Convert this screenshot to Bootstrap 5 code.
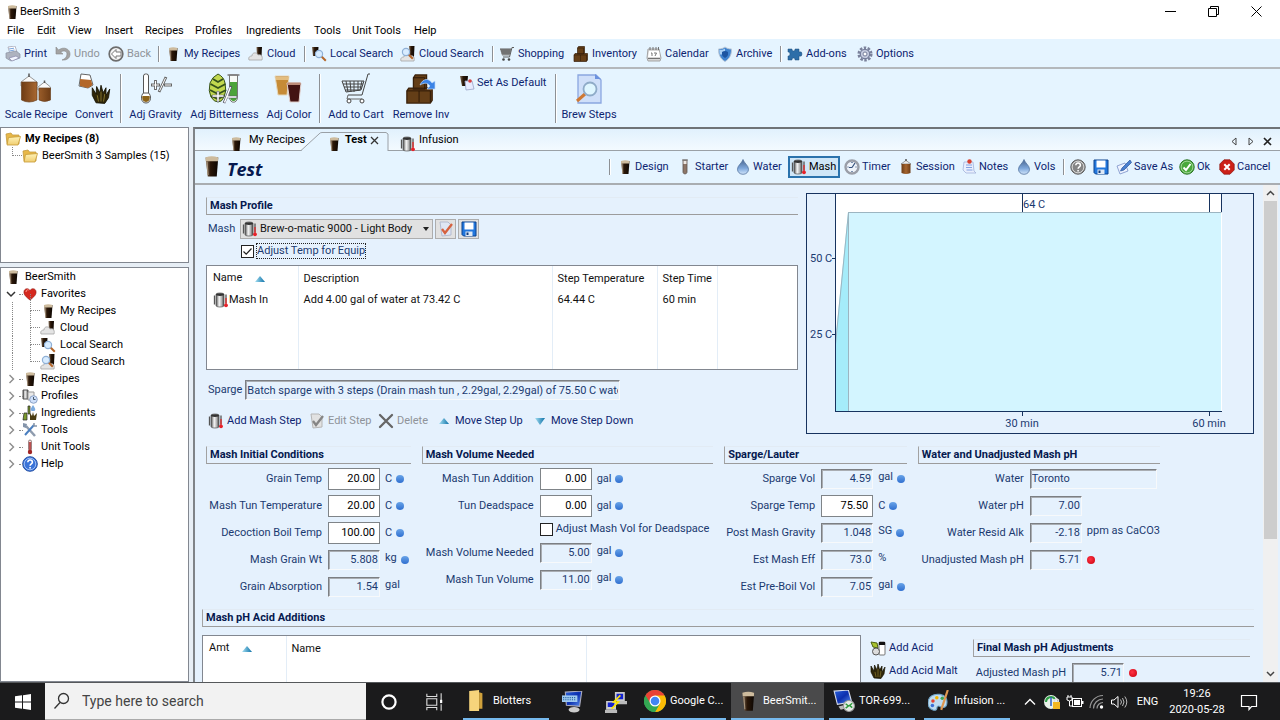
<!DOCTYPE html>
<html lang="en">
<head>
<meta charset="utf-8">
<meta name="viewport" content="width=device-width, initial-scale=1">
<title>BeerSmith 3</title>
<link rel="stylesheet" href="https://cdn.jsdelivr.net/npm/bootstrap@5.3.0/dist/css/bootstrap.min.css">
<script src="https://cdn.jsdelivr.net/npm/bootstrap@5.3.0/dist/js/bootstrap.bundle.min.js"></script>
<style>
:root { --ink:#0d2470; --label:#1b3a70; --pane:#e5f1fd; --tool:#e5f4ff; --edge:#828790; }
body { font-family:Roboto,"Open Sans",sans-serif; font-size:11px; line-height:16px; color:#000; background:#fff; }
button, input, select { font:inherit; color:inherit; }
.app { height:100vh; overflow:hidden; }
.ic { width:16px; height:16px; flex:none; }
.ic-lg { width:34px; height:32px; flex:none; }
.titlebar { height:23px; padding-right:2px; }
.win-ctl { width:43px; height:20px; border:0; background:none; padding:0; display:grid; place-items:center; }
.menus { display:grid; grid-template-columns:30px 31px 37px 40px 50px 51px 68px 38px 62px auto; height:16px; padding-left:7px; justify-content:start; align-items:center; }
.menus a, .tree a { color:#000; text-decoration:none; white-space:nowrap; }
.tools1, .tools2, .head-tools, .step-tools { display:grid; justify-content:start; align-items:center; }
.tools1 { height:30px; padding:1px 0 0 5px; background:var(--tool); border-bottom:2px solid #b4b8bc; grid-template-columns:50px 53px 50px 7px 83px 56px 7px 89px 92px 7px 74px 73px 71px 63px 7px 70px auto; }
.tools2 { height:58px; padding-left:2px; background:var(--tool); grid-template-columns:68px 48px 6px 63px 75px 54px 7px 66px 64px 99px 7px 60px; }
.tb { border:0; background:none; padding:0; display:flex; align-items:center; gap:3px; color:var(--ink); white-space:nowrap; }
.tb:disabled { color:#8f9399; }
.tb-tall { flex-direction:column; gap:2px; height:50px; justify-self:center; }
.tb-side { align-self:start; margin-top:6px; padding-left:6px; gap:2px; }
.vline { width:2px; height:16px; border-left:1px solid #8d9095; border-right:1px solid #fff; }
.tools2 .vline { height:49px; justify-self:center; }
.workspace { min-height:0; background:#e7eef5; }
.side { width:189px; flex:none; }
.tree { background:#fff; border:1px solid var(--edge); overflow:hidden; }
.tree-top { flex:0 0 136px; padding-top:2px; }
.tree ul { list-style:none; margin:0; padding:0; }
.tree li a { position:relative; display:flex; align-items:center; gap:4px; height:17px; }
.tree .twist { width:12px; height:12px; flex:none; margin-right:2px; }
.tree .lv0 { padding-left:4px; }
.tree .lv1 { padding-left:4px; gap:3px; }
.tree .lv1::after { content:""; position:absolute; left:18px; top:9px; width:4px; border-top:1px dotted #888; }
.tree .lv2 { padding-left:39px; }
.tree .lv2::before { content:""; position:absolute; left:29px; top:-8px; width:10px; height:17px; border-left:1px dotted #888; border-bottom:1px dotted #888; }
.tree .lv2::after { content:""; position:absolute; left:11px; top:0; height:17px; border-left:1px dotted #888; }
.tree .sample { margin-left:-18px; }
.tree .sample::before { top:0; height:9px; }
.tree .sample::after { display:none; }
.pane { min-width:0; border-left:2px solid #7f8387; border-top:2px solid #6f7377; background:var(--pane); }
.tabbar { height:22px; background:linear-gradient(#e1f1fd,#f3faff); border-bottom:1px solid #9aa0a6; position:relative; }
.tabbar .tab-shape { position:absolute; left:105px; top:3px; width:90px; height:19px; }
.doc-tabs { display:grid; grid-template-columns:98px 74px auto; padding-left:33px; justify-content:start; height:22px; }
.doc-tabs button { position:relative; border:0; background:none; padding:3px 0 0; display:flex; gap:5px; white-space:nowrap; align-items:flex-start; }
.doc-tabs button + button { gap:3px; }
.doc-tabs .ic { margin-top:4px; }
.mini { border:0; background:none; padding:0; width:17px; height:16px; display:grid; place-items:center; }
.pane-head { height:34px; background:var(--tool); border-bottom:2px solid #a9adb1; padding:0 2px 0 9px; }
.pane-head h1 { font-family:"Open Sans",sans-serif; font-size:18px; line-height:24px; font-weight:700; font-style:italic; color:#06194f; margin:0; padding:4px 0 0 4px; }
.head-glass { width:15px; height:22px; }
.head-tools { grid-template-columns:8px 60px 58px 53px 56px 54px 63px 55px 47px 7px 23px 23px 63px 40px 59px; height:32px; }
.head-tools .tb { gap:2px; }
.tb.on { width:52px; height:22px; border:1px solid #2a72ac; outline:1px solid #2a72ac; outline-offset:-2px; background:#cfe6f7; color:#000; padding-left:2px; }
.form-wrap { min-height:0; padding-right:2px; }
.form-area { min-width:0; overflow:hidden; padding:8px 9px 0 11px; color:var(--label); }
.upper { display:grid; grid-template-columns:minmax(0,1fr) 448px; gap:8px; }
.sec { font-size:11px; line-height:16px; height:18px; margin:0; padding-left:3px; font-weight:700; color:#06194f; border-left:1px solid #a2a2a2; border-bottom:1px solid #9c9c9c; border-top:1px solid #e2ebf4; white-space:nowrap; }
.mash-row { padding-left:2px; gap:2px; }
.mash-row label { width:30px; }
.flatbtn { width:21px; height:20px; border:1px solid #adadad; background:#e1e1e1; padding:0; display:grid; place-items:center; }
.picker { position:relative; width:193px; }
.picker select { appearance:none; display:block; width:100%; height:20px; border:1px solid #adadad; background:#e1e1e1; color:#111; padding:0 14px 0 19px; border-radius:0; }
.picker .ic { position:absolute; left:2px; top:2px; }
.picker .drop { position:absolute; right:4px; top:8px; width:6px; height:4px; }
.adj { height:16px; padding-left:35px; gap:3px; }
.tick { appearance:none; width:13px; height:13px; border:1px solid #222; background:#fff; margin:0; flex:none; }
.tick:checked { background:#fff url("data:image/svg+xml,%3Csvg xmlns='http://www.w3.org/2000/svg' viewBox='0 0 11 11'%3E%3Cpath d='M1.5 5.5l2.700 2.700L9.500 2.500' fill='none' stroke='%23222' stroke-width='1.200'/%3E%3C/svg%3E") center/11px; }
.focused { outline:1px dotted #222; line-height:14px; }
.listbox { background:#fff; border:1px solid var(--edge); color:#111; }
.listbox table { width:100%; height:100%; border-collapse:collapse; table-layout:fixed; }
.listbox th, .listbox td { font-weight:400; padding:0 5px; height:18px; border-right:1px solid #e3edf7; white-space:nowrap; vertical-align:middle; }
.listbox th:first-child, .listbox td:first-child { padding-left:6px; }
.listbox th:last-child, .listbox td:last-child { border-right:0; }
.listbox th { height:25px; }
.listbox th .ic { margin-left:10px; }
.steps { height:105px; margin-top:6px; }
.sparge { margin-top:10px; gap:3px; padding-left:2px; }
.sparge input { width:375px; }
.sunk { border:1px solid; border-color:#7c7f83 #f7f9fb #f7f9fb #7c7f83; box-shadow:inset 1px 1px 0 #a9adb2; background:transparent; color:var(--label); height:20px; padding:0 1px; border-radius:0; min-width:0; outline:0; }
.step-tools { grid-template-columns:101px 69px 58px 96px auto; height:18px; margin-top:12px; padding-left:2px; }
.quad { display:grid; grid-template-columns:205fr 292fr 183fr 241fr; gap:11px; margin:12px 94px 0 0; }
.quad .sec { margin-bottom:1px; }
.fld { display:flex; align-items:center; height:27px; gap:5px; white-space:nowrap; }
.fld > label { text-align:right; flex:none; margin-right:1px; }
.g1 label { width:116px; } .g2 .fld label { width:112px; } .g3 label { width:91px; } .g4 label { width:106px; }
.final .fld label { width:93px; }
.final .fld { margin-top:2px; }
.fld input { width:52px; flex:none; text-align:right; }
.fld .boxed { height:22px; border:1px solid #7f8488; background:#fff; color:#000; border-radius:0; padding:0 4px 0 0; }
.fld .sunk + span { padding-bottom:4px; }
.fld .wide { width:127px; text-align:left; }
.dot { width:8px; height:8px; border-radius:50%; background:linear-gradient(#69a4e8,#2f6fd0); flex:none; margin-left:-1px; }
.dot.red { background:radial-gradient(circle at 40% 40%,#f34,#c8000c); margin-left:0; }
.checkrow { height:20px; padding-left:118px; gap:3px; white-space:nowrap; }
.acid-title { margin:9px 0 0 -4px; }
.acid { display:grid; grid-template-columns:minmax(0,1fr) 94px 277px; column-gap:9px; margin:8px 4px 0 -4px; }
.acid .listbox { height:120px; }
.acid-btns { padding-top:5px; display:grid; gap:7px; align-content:start; }
.vscroll { width:15px; flex:none; background:#f0f0f0; }
.vscroll .thumb { flex:0 0 68%; background:#cdcdcd; margin:0 1px; }
.mini-arrow { height:16px; display:grid; place-items:center; border:0; background:none; padding:0; }
.taskbar { height:38px; flex:none; background:#1b1b1c; color:#fff; border-top:1px solid #55585b; }
.find { flex:0 1 321px; min-width:120px; background:#f2f2f2; color:#444; border-bottom:1px solid #aaa; }
.find input { border:0; background:none; font-size:14px; line-height:20px; width:100%; outline:0; padding:0; }
.find input::placeholder { color:#444; opacity:1; }
.apps { gap:5px; margin-left:7px; }
.tk { border:0; background:none; color:#fff; display:flex; align-items:center; padding:0 0 0 4px; gap:4px; flex:none; white-space:nowrap; }
.tk svg { width:22px; height:22px; flex:none; }
.tk.run { width:86px; border-bottom:2px solid #76b9ed; }
.tk.now { width:93px; background:#4a4a4b; padding-left:6px; }
.tk.solo { width:38px; padding:0; justify-content:center; }
.tk.sys { width:45px; }
.tk .winlogo { width:16px; }
.tray { display:grid; grid-template-columns:23px 22px 23px 22px 22px 35px 64px 40px 11px; align-items:center; justify-items:center; margin-left:auto; }
.tray svg { width:18px; height:18px; }
.clock { line-height:16px; text-align:center; }
</style>
</head>
<body>
<svg width="0" height="0" class="position-absolute" aria-hidden="true">
<defs>
<linearGradient id="gBeer"><stop offset="0" stop-color="#85705a"/><stop offset=".4" stop-color="#2a1708"/><stop offset="1" stop-color="#0c0602"/></linearGradient>
<linearGradient id="gSteel"><stop offset="0" stop-color="#4a4a4a"/><stop offset=".4" stop-color="#f7f7f7"/><stop offset=".7" stop-color="#b5b5b5"/><stop offset="1" stop-color="#444"/></linearGradient>
<linearGradient id="gDrop" x2="0" y2="1"><stop offset="0" stop-color="#45638e"/><stop offset=".6" stop-color="#7fa8dc"/><stop offset="1" stop-color="#d3e6fb"/></linearGradient>
<linearGradient id="gFold" x2="0" y2="1"><stop offset="0" stop-color="#fff3b8"/><stop offset="1" stop-color="#f0cd70"/></linearGradient>
<linearGradient id="gTri"><stop offset="0" stop-color="#a5dff2"/><stop offset="1" stop-color="#0d71a8"/></linearGradient>
<linearGradient id="gKeg"><stop offset="0" stop-color="#6e3c15"/><stop offset=".5" stop-color="#a5652f"/><stop offset="1" stop-color="#6e3c15"/></linearGradient>
<linearGradient id="gSky" x2="1" y2="1"><stop offset="0" stop-color="#2a62dd"/><stop offset=".5" stop-color="#0c2fae"/><stop offset="1" stop-color="#5d94f0"/></linearGradient>
</defs>
<symbol id="glass" viewBox="0 0 16 16"><path d="M4 2h8.500l-1 13h-6z" fill="url(#gBeer)"/><path d="M4 2q4-1.500 8.500 0l-.2 2.500H4.200z" fill="#cdbb9d"/><path d="M5 5l.7 9" stroke="#a8967f" stroke-width=".8"/></symbol>
<symbol id="print" viewBox="0 0 16 16"><path d="M3 1l7-1 2 6-7 2z" fill="#fff" stroke="#99a" stroke-width=".7"/><path d="M1 7l10-2 4 3v4l-9 3-5-3z" fill="#aeb3bf" stroke="#8a90a0" stroke-width=".7"/><path d="M4 12l7-2 3 2-7 3z" fill="#f3f6ff" stroke="#88a" stroke-width=".7"/><path d="M4 3l5-.8M4.500 5l5-1" stroke="#79a4dd"/></symbol>
<symbol id="undo" viewBox="0 0 16 16"><path d="M1 1v7h7L5.500 6C9 4 12 5 12 8s-2 5-5 6c5 .5 8-2 8-6 0-5-6-8-11.500-4z" fill="#a3a3a3" stroke="#868686" stroke-width=".6"/></symbol>
<symbol id="back" viewBox="0 0 16 16"><circle cx="8" cy="8" r="6.800" fill="#f6f6f6" stroke="#6d6d6d" stroke-width="1.700"/><path d="M8 3.500L3.500 8 8 12.500V10h5V6H8z" fill="#fff" stroke="#777"/></symbol>
<symbol id="cloudshape" viewBox="0 0 16 16"><path d="M1 14c-1-3 1-4 3-4 0-4 5-4 6-1 3-1 5 1 4 5z" fill="#e4e4e4" stroke="#a5a5a5" stroke-width=".8"/></symbol>
<symbol id="cloud" viewBox="0 0 16 16"><path d="M8.500 1H14l-.6 11H9z" fill="url(#gBeer)"/><use href="#cloudshape"/></symbol>
<symbol id="lens" viewBox="0 0 16 16"><path d="M10.500 10.500l4.300 4.300" stroke="#b5672b" stroke-width="2"/><circle cx="8" cy="8" r="3.600" fill="#d8ecff" stroke="#8fb0d6" stroke-width="1.200"/></symbol>
<symbol id="lsearch" viewBox="0 0 16 16"><path d="M1 1h6.500l-.6 9H2z" fill="url(#gBeer)"/><use href="#lens"/></symbol>
<symbol id="csearch" viewBox="0 0 16 16"><path d="M9 0h5.500l-.6 12H10z" fill="url(#gBeer)"/><use href="#cloudshape" y="1"/><use href="#lens" x="-2" y="-2"/></symbol>
<symbol id="cart" viewBox="0 0 16 16"><path d="M1 3h11l-1.500 6.500H3z" fill="#888"/><path d="M15 1.500h-2L10.500 11H4M1 3h11M2 5h10M2.500 7h9" fill="none" stroke="#5d5d5d"/><circle cx="4.500" cy="13.500" r="1.300" fill="#444"/><circle cx="10" cy="13.500" r="1.300" fill="#444"/></symbol>
<symbol id="boxes" viewBox="0 0 16 16"><path d="M4.500 2l1-1.500h6V7l-1 1h-6zM1 9l1-1.500h12.500V14l-1 1.500H1z" fill="#643e17" stroke="#3a210b" stroke-width=".7"/><path d="M4.500 2h6v6M1 9h12.500v6M7.500 9v6" fill="none" stroke="#2b1807" stroke-width=".5"/></symbol>
<symbol id="calendar" viewBox="0 0 16 16"><path d="M2 3h11l2 9-1 3H2l-1-3z" fill="#d6d6d6" stroke="#a5a5a5"/><path d="M3 5h10l1 6H2z" fill="#fff"/><path d="M5 7h1v3M8 7h2.500L9 10M4 1v3M7 1v3M10 1v3M12.500 1v3M2 12.500h12" fill="none" stroke="#666" stroke-width=".9"/></symbol>
<symbol id="shield" viewBox="0 0 16 16"><path d="M8 1c2 1.500 4 2 6.500 2 0 6-2 10-6.500 12.500C3.500 13 1.500 9 1.500 3 4 3 6 2.500 8 1z" fill="#3f83cf" stroke="#b8c6d6"/><path d="M8 2.500v6H2.800C2.400 7 2.300 5.500 2.300 4 4.500 4 6.500 3.500 8 2.500z" fill="#a9d0f5"/><path d="M5 6q3-2 6 0v3q-1 2-3 3-2-1-3-3z" fill="#1c55a2"/></symbol>
<symbol id="puzzle" viewBox="0 0 16 16"><path d="M1 3h4q-.5 2 1.500 2T8 3h4v3q3-1 3 2t-3 2v4H8q.5-2-1.500-2T5 14H1v-4q2 .5 2-2T1 6z" fill="#2d6ea8" stroke="#1c4d7b" stroke-width=".5"/></symbol>
<symbol id="gear" viewBox="0 0 16 16"><circle cx="8" cy="8" r="6.300" fill="none" stroke="#7b829c" stroke-width="2.500" stroke-dasharray="2.500 1.450"/><circle cx="8" cy="8" r="4.700" fill="#c5cbdf" stroke="#767e9b" stroke-width="1.200"/><circle cx="8" cy="8" r="2" fill="#fff" stroke="#767e9b"/></symbol>
<symbol id="kegs" viewBox="0 0 34 32"><path d="M2 9l8-6 8 6v4H2zM19 14l6.500-5 6 5v3H19z" fill="#fafafa" stroke="#999"/><path d="M10 4V.5M25.500 10V7.500" stroke="#555" stroke-width="1.500"/><path d="M2.500 9h15.500v18q-8 4-15.500 0zM20 15h11.500v12q-6 3-11.500 0z" fill="url(#gKeg)" stroke="#6b4220" stroke-width=".7"/></symbol>
<symbol id="claw" viewBox="0 0 16 16"><path d="M4 15L1 9V3l3 5 .5-6L7 7l1-6 1.700 6L12 3v6l3-5-1 7-3 4.500z" fill="#2f2609" stroke="#161202" stroke-width=".7"/><path d="M5 9l1 5M8 6v8M11 8l-1 6" stroke="#8b7a2c" stroke-width=".7"/></symbol>
<symbol id="convert" viewBox="0 0 34 32"><path d="M4 1l9 1 3 10-5 3-9-2z" fill="#fff" stroke="#666"/><path d="M3 6l11 1 1.500 5-4.500 3-8-2z" fill="#b3672a"/><use href="#claw" x="14" y="11" width="20" height="20"/></symbol>
<symbol id="gravity" viewBox="0 0 34 32"><rect x="4.500" y="1" width="5" height="22" rx="2" fill="#fff" stroke="#555"/><path d="M4.500 20c-3 2-3 10 2.500 10s5.500-8 2.500-10z" fill="#fff" stroke="#555"/><path d="M3.500 23h7c1 3-1 6-3.500 6S2.500 26 3.500 23z" fill="#8c6319"/><path d="M12 12h9M16.500 7v10M20 19L27 4M25 12h8" stroke="#666" stroke-width="2.800"/><path d="M13 12h7M16.500 8v8M20.500 18L26.500 5M26 12h6" stroke="#fff"/></symbol>
<symbol id="bitter" viewBox="0 0 34 32"><path d="M11 1q6 3 7 9 2 8-1 14-2 5-6 5t-7-5Q1 18 3 10 5 4 11 1z" fill="#c2d84f" stroke="#35511c"/><path d="M6 6l5 3 5-3M3.500 11l7.500 4 7.500-4M3 17l8 4 8-4M4 23l7 3 6-3" fill="none" stroke="#35511c" stroke-width="1.800"/><path d="M22.500 2v22c0 7 8 7 8 0V2z" fill="#f7faf7" stroke="#777"/><path d="M23 9h7v15c0 5.500-7 5.500-7 0z" fill="#4ba339"/><path d="M20.500 2h12" stroke="#777" stroke-width="1.500"/><path d="M5 23h12M11 18v11M17 30l7-17M20 24h10" stroke="#556" stroke-width="2.600"/><path d="M5.500 23h11M11 18.500v10M17.500 29.500l6-15.500M20.500 24h9" stroke="#fff" stroke-width="1.500"/></symbol>
<symbol id="colors" viewBox="0 0 34 32"><path d="M3 3h14l-2 19H6z" fill="#c68b37" stroke="#e6d8bc"/><path d="M3.500 4h13v3H4z" fill="#e3bd80"/><path d="M15 10h14l-2 19H18z" fill="#431413" stroke="#e4d1cd"/><path d="M15.500 9.500h13v2.500h-13z" fill="#bd8c79"/></symbol>
<symbol id="bigcart" viewBox="0 0 34 32"><path d="M31 1h-2l-6 21H9M3 8h22l-3 9-15 2zM4 11h20M5 14h18M6 17h15M7 8l2 11M11 8l1 11M15 8v11M19 8v10M23 8l-2 9" fill="none" stroke="#444"/><path d="M9 22l-1 4h15" fill="none" stroke="#666"/><circle cx="10" cy="28" r="2" fill="#fff" stroke="#444"/><circle cx="23" cy="28" r="2" fill="#fff" stroke="#444"/></symbol>
<symbol id="boxmove" viewBox="0 0 34 32"><use href="#boxes" x="1" y="1" width="30" height="30"/><path d="M16 12c3-7 9-7 12-2l3-2v8h-8l3-3c-3-4-6-3-10-1z" fill="#3b83e6" stroke="#bcd8fa" stroke-width=".7"/></symbol>
<symbol id="doclens" viewBox="0 0 34 32"><path d="M6 2h18l5 5v23H6z" fill="#cfdff9" stroke="#8aa6e0" stroke-width="1.300"/><path d="M23 1v5h6z" fill="#6c92de"/><path d="M13 21L5 28" stroke="#cf7833" stroke-width="3"/><circle cx="18" cy="16" r="6.500" fill="#dff6ff" stroke="#8fabc8" stroke-width="1.800"/></symbol>
<symbol id="setdef" viewBox="0 0 16 16"><path d="M1 1h8l-1 10H3z" fill="url(#gBeer)"/><path d="M6 6h7l2 8-8 1z" fill="#e7ebff" stroke="#9aa2c8" stroke-width=".8"/><circle cx="11" cy="6" r="1.800" fill="#db3f3f"/></symbol>
<symbol id="folder" viewBox="0 0 16 16"><path d="M1 3l5-1 1.500 2H14v9H2z" fill="#e8b848" stroke="#c39a40" stroke-width=".8"/><path d="M3.500 6.500l12-1L13 14H2z" fill="url(#gFold)" stroke="#c79a35" stroke-width=".8"/></symbol>
<symbol id="heart" viewBox="0 0 16 16"><path d="M8 14C4 11 1.500 8.500 2 5.500 2.500 2 6.500 2 8 4.500 9.500 2 13.500 2 14 5.500 14.500 8.500 12 11 8 14z" fill="#d5281e" stroke="#8f1510" stroke-width=".6"/><path d="M4 6c0-2 1.500-2.500 2.500-2" fill="none" stroke="#ff9b8e"/></symbol>
<symbol id="kettle" viewBox="0 0 16 16"><path d="M3 2.500C3 .5 11 .5 11 2.500v11c0 2-8 2-8 0z" fill="url(#gSteel)" stroke="#555" stroke-width=".7"/><ellipse cx="7" cy="2.600" rx="4" ry="1.400" fill="#333"/><path d="M1.500 3.500v9M13 2.500v9" stroke="#555" stroke-width="1.300"/><path d="M13 6v6" stroke="#e22" stroke-width="1.200"/><circle cx="13" cy="13.300" r="1.900" fill="#e8222a"/></symbol>
<symbol id="profiles" viewBox="0 0 16 16"><path d="M1 2h5v9H1z" fill="url(#gSteel)" stroke="#555"/><path d="M6 4h6v8H6z" fill="#e9e9e9" stroke="#999"/><circle cx="11.500" cy="11.500" r="3.800" fill="#cfe0fa" stroke="#8ca2c6"/><path d="M11.500 9v2.500h2" fill="none" stroke="#456"/></symbol>
<symbol id="ingr" viewBox="0 0 16 16"><path d="M2 8h3v7H1zM6 1h2v8H6z" fill="#7c9c2e" stroke="#222" stroke-width=".7"/><path d="M11 0c3 4 3 6 0 6s-3-2 0-6z" fill="#7cabdf"/><path d="M8 15V8l2 3 1-4 1 4 3-3-1 7z" fill="#4a3c12"/></symbol>
<symbol id="wrench" viewBox="0 0 16 16"><path d="M4 4l9 10" stroke="#8f9cae" stroke-width="2.500"/><path d="M1 1l4 1-1 4-3-1z" fill="#8494aa"/><path d="M12 3L3 13" stroke="#4b7fc0" stroke-width="2"/><path d="M12 1v3h3" fill="none" stroke="#8795a8" stroke-width="1.500"/></symbol>
<symbol id="thermo" viewBox="0 0 16 16"><rect x="6.500" y="1" width="3" height="11" rx="1.500" fill="#e9dede" stroke="#866" stroke-width=".8"/><path d="M8 3v9" stroke="#a22" stroke-width="1.500"/><circle cx="8" cy="13" r="2.200" fill="#a02424"/></symbol>
<symbol id="help" viewBox="0 0 16 16"><circle cx="8" cy="8" r="7.300" fill="#3a73d8" stroke="#2550a5"/><circle cx="8" cy="8" r="5.800" fill="none" stroke="#b9d2fb" stroke-width=".8"/><path d="M5.800 6.200c0-3 4.600-2.700 4.600 0 0 1.700-2.300 1.600-2.300 3.500M8.100 11v1.500" fill="none" stroke="#fff" stroke-width="1.600"/></symbol>
<symbol id="helpg" viewBox="0 0 16 16"><circle cx="8" cy="8" r="7.200" fill="#858585" stroke="#5d5d5d"/><circle cx="8" cy="8" r="5.900" fill="none" stroke="#ddd"/><path d="M5.800 6.200c0-3 4.600-2.700 4.600 0 0 1.700-2.300 1.600-2.300 3.500M8.100 11v1.500" fill="none" stroke="#fff" stroke-width="1.500"/></symbol>
<symbol id="tube" viewBox="0 0 16 16"><path d="M6 1h4v12c0 2.500-4 2.500-4 0z" fill="#8d7668" stroke="#5e544f" stroke-width=".8"/><path d="M6.500 2h3v3h-3z" fill="#ece8e5"/><path d="M5 1h6" stroke="#888" stroke-width="1.300"/></symbol>
<symbol id="drop" viewBox="0 0 16 16"><path d="M8 .5c1 3.500 5.500 6 5.500 9.700 0 2.800-2.200 5.100-5.500 5.100s-5.500-2.300-5.500-5.100C2.500 6.500 7 4 8 .5z" fill="url(#gDrop)" stroke="#55759f" stroke-width=".8"/></symbol>
<symbol id="watch" viewBox="0 0 16 16"><circle cx="8" cy="8" r="6.500" fill="#eef3fa" stroke="#9a9ea8" stroke-width="2.400"/><path d="M8 8.500L11 4M8 8.500H5M8 3v1M3.500 8h1M11.500 8h1M8 12v1" stroke="#35517c" stroke-width="1.200"/></symbol>
<symbol id="keg" viewBox="0 0 16 16"><path d="M3 5l5-3.500L13 5z" fill="#eee" stroke="#777" stroke-width=".7"/><path d="M3.500 5h9v9q-4.500 2-9 0z" fill="url(#gKeg)"/><path d="M8 2V0" stroke="#555" stroke-width="1.500"/></symbol>
<symbol id="notes" viewBox="0 0 16 16"><path d="M3 3h9l1 9 2 2H5L2 11z" fill="#e9effd" stroke="#a2b2da" stroke-width=".8"/><path d="M5 6h6M5 8.500h6M5.500 11h6" stroke="#6b8fdb" stroke-width=".8"/><circle cx="8.500" cy="2.500" r="2.200" fill="#d8402f"/></symbol>
<symbol id="floppy" viewBox="0 0 16 16"><path d="M1 1h14v14H2.500L1 13.500z" fill="#2277dd" stroke="#0c438d"/><path d="M3.500 1.500h9v7h-9z" fill="#fff"/><path d="M4.500 10.500h7V15h-7z" fill="#dfe9f5"/><path d="M5.500 11.500h2V14h-2z" fill="#123a78"/></symbol>
<symbol id="saveas" viewBox="0 0 16 16"><path d="M1 7l8-3 3 8-8 3z" fill="#eef3ff" stroke="#7a90c8" stroke-width=".8"/><path d="M14 1l1.500 2.500L8 11l-3.500 1L6 9z" fill="#4a80cf" stroke="#2b559c" stroke-width=".7"/></symbol>
<symbol id="ok" viewBox="0 0 16 16"><circle cx="8" cy="8" r="7.200" fill="#4aa83c" stroke="#2b7424"/><circle cx="8" cy="8" r="5.900" fill="none" stroke="#b7e3ad" stroke-width=".8"/><path d="M4.500 8.500L7 11l4.500-6" fill="none" stroke="#fff" stroke-width="2"/></symbol>
<symbol id="cancel" viewBox="0 0 16 16"><path d="M5 .8h6L15.200 5v6L11 15.200H5L.8 11V5z" fill="#cc2118" stroke="#8b120d" stroke-width=".7"/><path d="M5.300 5.300l5.400 5.400M10.700 5.300l-5.400 5.400" stroke="#fff" stroke-width="2"/></symbol>
<symbol id="editdoc" viewBox="0 0 16 16"><path d="M2 1h8l3 3v10L4 15z" fill="#dfe6f3" stroke="#b3bbd0"/><path d="M4 8l3 4 7-9" fill="none" stroke="#d6623f" stroke-width="2.300"/></symbol>
<symbol id="editgray" viewBox="0 0 16 16"><path d="M2 1h8l3 3v10L4 15z" fill="#e2e2e2" stroke="#b5b5b5"/><path d="M4 8l3 4 7-9" fill="none" stroke="#858585" stroke-width="2.300"/></symbol>
<symbol id="xmark" viewBox="0 0 16 16"><path d="M2 2l12 12M14 2L2 14" stroke="#666" stroke-width="2.300" stroke-linecap="round"/></symbol>
<symbol id="up" viewBox="0 0 16 16"><path d="M8 5l5 6H3z" fill="url(#gTri)"/></symbol>
<symbol id="down" viewBox="0 0 16 16"><path d="M3 5h10l-5 7z" fill="url(#gTri)"/></symbol>
<symbol id="acid" viewBox="0 0 16 16"><path d="M1 2l6 1 1 5-5-1z" fill="#a9c22e" stroke="#4d6215"/><rect x="9" y="2" width="6" height="13" rx="1" fill="#fff" stroke="#777"/><path d="M9 2h6v3H9z" fill="#111"/><circle cx="6" cy="11.500" r="3.500" fill="#dcdcdc" stroke="#555"/></symbol>
<symbol id="chev" viewBox="0 0 12 12"><path d="M4.500 2L8.500 6l-4 4" fill="none" stroke="#8c8c8c" stroke-width="1.400"/></symbol>
<symbol id="chevd" viewBox="0 0 12 12"><path d="M2 4l4 4 4-4" fill="none" stroke="#333" stroke-width="1.500"/></symbol>
</svg>

<div class="app d-flex flex-column">
  <header class="flex-shrink-0">
    <div class="titlebar d-flex align-items-center">
      <svg class="ic ms-1"><use href="#glass"/></svg><span class="flex-grow-1">BeerSmith 3</span>
      <button class="win-ctl" aria-label="Minimize"><svg width="11" height="11"><path d="M0 5.500h11" stroke="#000"/></svg></button>
      <button class="win-ctl" aria-label="Restore"><svg width="11" height="11"><path d="M.5 2.500h8v8h-8zM2.500 2.500v-2h8v8h-2" fill="none" stroke="#000"/></svg></button>
      <button class="win-ctl" aria-label="Close"><svg width="11" height="11"><path d="M.5.5l10 10M10.500.5l-10 10" stroke="#000"/></svg></button>
    </div>
    <nav class="menus"><a href="#">File</a><a href="#">Edit</a><a href="#">View</a><a href="#">Insert</a><a href="#">Recipes</a><a href="#">Profiles</a><a href="#">Ingredients</a><a href="#">Tools</a><a href="#">Unit Tools</a><a href="#">Help</a></nav>
    <div class="tools1">
      <button class="tb"><svg class="ic"><use href="#print"/></svg>Print</button>
      <button class="tb" disabled><svg class="ic"><use href="#undo"/></svg>Undo</button>
      <button class="tb" disabled><svg class="ic"><use href="#back"/></svg>Back</button>
      <span class="vline"></span>
      <button class="tb"><svg class="ic"><use href="#glass"/></svg>My Recipes</button>
      <button class="tb"><svg class="ic"><use href="#cloud"/></svg>Cloud</button>
      <span class="vline"></span>
      <button class="tb"><svg class="ic"><use href="#lsearch"/></svg>Local Search</button>
      <button class="tb"><svg class="ic"><use href="#csearch"/></svg>Cloud Search</button>
      <span class="vline"></span>
      <button class="tb"><svg class="ic"><use href="#cart"/></svg>Shopping</button>
      <button class="tb"><svg class="ic"><use href="#boxes"/></svg>Inventory</button>
      <button class="tb"><svg class="ic"><use href="#calendar"/></svg>Calendar</button>
      <button class="tb"><svg class="ic"><use href="#shield"/></svg>Archive</button>
      <span class="vline"></span>
      <button class="tb"><svg class="ic"><use href="#puzzle"/></svg>Add-ons</button>
      <button class="tb"><svg class="ic"><use href="#gear"/></svg>Options</button>
    </div>
    <div class="tools2">
      <button class="tb tb-tall"><svg class="ic-lg"><use href="#kegs"/></svg>Scale Recipe</button>
      <button class="tb tb-tall"><svg class="ic-lg"><use href="#convert"/></svg>Convert</button>
      <span class="vline"></span>
      <button class="tb tb-tall"><svg class="ic-lg"><use href="#gravity"/></svg>Adj Gravity</button>
      <button class="tb tb-tall"><svg class="ic-lg"><use href="#bitter"/></svg>Adj Bitterness</button>
      <button class="tb tb-tall"><svg class="ic-lg"><use href="#colors"/></svg>Adj Color</button>
      <span class="vline"></span>
      <button class="tb tb-tall"><svg class="ic-lg"><use href="#bigcart"/></svg>Add to Cart</button>
      <button class="tb tb-tall"><svg class="ic-lg"><use href="#boxmove"/></svg>Remove Inv</button>
      <button class="tb tb-side"><svg class="ic"><use href="#setdef"/></svg>Set As Default</button>
      <span class="vline"></span>
      <button class="tb tb-tall"><svg class="ic-lg"><use href="#doclens"/></svg>Brew Steps</button>
    </div>
  </header>

  <div class="workspace d-flex flex-grow-1">
    <aside class="side d-flex flex-column gap-1 me-1">
      <nav class="tree tree-top"><ul>
        <li><a href="#" class="lv0 fw-bold"><svg class="ic"><use href="#folder"/></svg>My Recipes (8)</a></li>
        <li><a href="#" class="lv2 sample"><svg class="ic"><use href="#folder"/></svg>BeerSmith 3 Samples (15)</a></li>
      </ul></nav>
      <nav class="tree flex-grow-1"><ul>
        <li><a href="#" class="lv0"><svg class="ic"><use href="#glass"/></svg>BeerSmith</a></li>
        <li><a href="#" class="lv1"><svg class="twist"><use href="#chevd"/></svg><svg class="ic"><use href="#heart"/></svg>Favorites</a></li>
        <li><a href="#" class="lv2"><svg class="ic"><use href="#glass"/></svg>My Recipes</a></li>
        <li><a href="#" class="lv2"><svg class="ic"><use href="#cloud"/></svg>Cloud</a></li>
        <li><a href="#" class="lv2"><svg class="ic"><use href="#lsearch"/></svg>Local Search</a></li>
        <li><a href="#" class="lv2"><svg class="ic"><use href="#csearch"/></svg>Cloud Search</a></li>
        <li><a href="#" class="lv1"><svg class="twist"><use href="#chev"/></svg><svg class="ic"><use href="#glass"/></svg>Recipes</a></li>
        <li><a href="#" class="lv1"><svg class="twist"><use href="#chev"/></svg><svg class="ic"><use href="#profiles"/></svg>Profiles</a></li>
        <li><a href="#" class="lv1"><svg class="twist"><use href="#chev"/></svg><svg class="ic"><use href="#ingr"/></svg>Ingredients</a></li>
        <li><a href="#" class="lv1"><svg class="twist"><use href="#chev"/></svg><svg class="ic"><use href="#wrench"/></svg>Tools</a></li>
        <li><a href="#" class="lv1"><svg class="twist"><use href="#chev"/></svg><svg class="ic"><use href="#thermo"/></svg>Unit Tools</a></li>
        <li><a href="#" class="lv1"><svg class="twist"><use href="#chev"/></svg><svg class="ic"><use href="#help"/></svg>Help</a></li>
      </ul></nav>
    </aside>

    <main class="pane d-flex flex-column flex-grow-1">
      <div class="tabbar d-flex justify-content-between flex-shrink-0">
        <svg class="tab-shape" viewBox="0 0 90 19"><path d="M1 19L19 2q1-1.500 3-1.500h65l1 1V19z" fill="#e5f4ff"/><path d="M1 18.500L19 2q1-1.500 3-1.500h64l2 1.500v17" fill="none" stroke="#9aa0a6"/></svg>
        <div class="doc-tabs">
          <button><svg class="ic"><use href="#glass"/></svg>My Recipes</button>
          <button class="fw-bold"><svg class="ic"><use href="#glass"/></svg>Test<svg width="9" height="9" class="mt-1"><path d="M1 1l7 7M8 1L1 8" stroke="#333" stroke-width="1.300"/></svg></button>
          <button><svg class="ic"><use href="#kettle"/></svg>Infusion</button>
        </div>
        <div class="d-flex align-items-center pe-1 pt-1">
          <button class="mini" aria-label="Previous tab"><svg width="8" height="9"><path d="M6 1v7L2 4.500z" fill="none" stroke="#444"/></svg></button>
          <button class="mini" aria-label="Next tab"><svg width="8" height="9"><path d="M2 1v7l4-3.500z" fill="none" stroke="#444"/></svg></button>
          <button class="mini" aria-label="Close tab"><svg width="9" height="9"><path d="M1 1l7 7M8 1L1 8" stroke="#222" stroke-width="1.700"/></svg></button>
        </div>
      </div>
      <div class="pane-head d-flex align-items-center justify-content-between flex-shrink-0">
        <div class="d-flex align-items-center gap-1"><svg class="head-glass" viewBox="3 1 10 15" preserveAspectRatio="none"><use href="#glass" width="16" height="16"/></svg><h1>Test</h1></div>
        <div class="head-tools">
          <span class="vline"></span>
          <button class="tb"><svg class="ic"><use href="#glass"/></svg>Design</button>
          <button class="tb"><svg class="ic"><use href="#tube"/></svg>Starter</button>
          <button class="tb"><svg class="ic"><use href="#drop"/></svg>Water</button>
          <button class="tb on"><svg class="ic"><use href="#kettle"/></svg>Mash</button>
          <button class="tb"><svg class="ic"><use href="#watch"/></svg>Timer</button>
          <button class="tb"><svg class="ic"><use href="#keg"/></svg>Session</button>
          <button class="tb"><svg class="ic"><use href="#notes"/></svg>Notes</button>
          <button class="tb"><svg class="ic"><use href="#drop"/></svg>Vols</button>
          <span class="vline"></span>
          <button class="tb" aria-label="Help"><svg class="ic"><use href="#helpg"/></svg></button>
          <button class="tb" aria-label="Save"><svg class="ic"><use href="#floppy"/></svg></button>
          <button class="tb"><svg class="ic"><use href="#saveas"/></svg>Save As</button>
          <button class="tb"><svg class="ic"><use href="#ok"/></svg>Ok</button>
          <button class="tb"><svg class="ic"><use href="#cancel"/></svg>Cancel</button>
        </div>
      </div>

      <div class="form-wrap d-flex flex-grow-1">
        <div class="form-area flex-grow-1">
          <div class="upper">
            <section class="pt-1">
              <h2 class="sec">Mash Profile</h2>
              <div class="mash-row d-flex align-items-center mt-1">
                <label for="mash">Mash</label>
                <div class="picker"><select id="mash"><option>Brew-o-matic 9000 - Light Body</option></select><svg class="ic"><use href="#kettle"/></svg><svg class="drop"><path d="M0 0h6L3 4z" fill="#222"/></svg></div>
                <button class="flatbtn" aria-label="Edit profile"><svg class="ic"><use href="#editdoc"/></svg></button>
                <button class="flatbtn" aria-label="Save profile"><svg class="ic"><use href="#floppy"/></svg></button>
              </div>
              <div class="adj d-flex align-items-center mt-1"><input class="tick" type="checkbox" id="adj" checked><label class="focused" for="adj">Adjust Temp for Equip</label></div>
              <div class="listbox steps">
                <table>
                  <colgroup><col style="width:91px"><col><col style="width:105px"><col style="width:60px"><col style="width:80px"></colgroup>
                  <tr><th>Name<svg class="ic"><use href="#up"/></svg></th><th>Description</th><th>Step Temperature</th><th>Step Time</th><th></th></tr>
                  <tr><td><span class="d-flex align-items-center"><svg class="ic"><use href="#kettle"/></svg>Mash In</span></td><td>Add 4.00 gal of water at 73.42 C</td><td>64.44 C</td><td>60 min</td><td></td></tr>
                  <tr class="h-100"><td></td><td></td><td></td><td></td><td></td></tr>
                </table>
              </div>
              <div class="sparge d-flex align-items-center"><label for="sparge">Sparge</label><input class="sunk" id="sparge" readonly value="Batch sparge with 3 steps (Drain mash tun , 2.29gal, 2.29gal) of 75.50 C water"></div>
              <div class="step-tools">
                <button class="tb"><svg class="ic"><use href="#kettle"/></svg>Add Mash Step</button>
                <button class="tb" disabled><svg class="ic"><use href="#editgray"/></svg>Edit Step</button>
                <button class="tb" disabled><svg class="ic"><use href="#xmark"/></svg>Delete</button>
                <button class="tb"><svg class="ic"><use href="#up"/></svg>Move Step Up</button>
                <button class="tb"><svg class="ic"><use href="#down"/></svg>Move Step Down</button>
              </div>
            </section>
            <svg class="w-100 d-block" viewBox="0 0 448 241" role="img" aria-label="Mash temperature over time" font-size="11" fill="#1b3a70">
              <rect x=".5" y=".5" width="447" height="240" fill="#e5f1fd" stroke="#17335f"/>
              <rect x="29" y="1" width="387" height="218" fill="#fff"/>
              <path d="M29 219v-68L42 19v200z" fill="#a5ecfa"/><path d="M42 19h373v200H42z" fill="#d3f5ff"/>
              <path d="M29.500 151L42.500 19.500H415.500M42.500 19v200" fill="none" stroke="#9cb5c1"/>
              <path d="M29.500 1v218M415.500 1v18M216.500 1v18M403.500 1v18M29 218.500h387M26 65.500h4M26 141.500h4M216.500 219v4M403.500 219v4" fill="none" stroke="#17335f"/>
              <text x="217" y="15">64 C</text><text x="4" y="69">50 C</text><text x="4" y="145">25 C</text>
              <text x="216" y="234" text-anchor="middle">30 min</text><text x="403" y="234" text-anchor="middle">60 min</text>
            </svg>
          </div>

          <div class="quad">
            <section class="g1"><h2 class="sec">Mash Initial Conditions</h2>
              <div class="fld"><label for="a1">Grain Temp</label><input class="boxed" id="a1" value="20.00"><span>C</span><i class="dot"></i></div>
              <div class="fld"><label for="a2">Mash Tun Temperature</label><input class="boxed" id="a2" value="20.00"><span>C</span><i class="dot"></i></div>
              <div class="fld"><label for="a3">Decoction Boil Temp</label><input class="boxed" id="a3" value="100.00"><span>C</span><i class="dot"></i></div>
              <div class="fld"><label for="a4">Mash Grain Wt</label><input class="sunk" id="a4" readonly value="5.808"><span>kg</span><i class="dot"></i></div>
              <div class="fld"><label for="a5">Grain Absorption</label><input class="sunk" id="a5" readonly value="1.54"><span>gal</span></div>
            </section>
            <section class="g2"><h2 class="sec">Mash Volume Needed</h2>
              <div class="fld"><label for="b1">Mash Tun Addition</label><input class="boxed" id="b1" value="0.00"><span>gal</span><i class="dot"></i></div>
              <div class="fld"><label for="b2">Tun Deadspace</label><input class="boxed" id="b2" value="0.00"><span>gal</span><i class="dot"></i></div>
              <div class="checkrow d-flex align-items-center"><input class="tick" type="checkbox" id="b3"><label for="b3">Adjust Mash Vol for Deadspace</label></div>
              <div class="fld"><label for="b4">Mash Volume Needed</label><input class="sunk" id="b4" readonly value="5.00"><span>gal</span><i class="dot"></i></div>
              <div class="fld"><label for="b5">Mash Tun Volume</label><input class="sunk" id="b5" readonly value="11.00"><span>gal</span><i class="dot"></i></div>
            </section>
            <section class="g3"><h2 class="sec">Sparge/Lauter</h2>
              <div class="fld"><label for="c1">Sparge Vol</label><input class="sunk" id="c1" readonly value="4.59"><span>gal</span><i class="dot"></i></div>
              <div class="fld"><label for="c2">Sparge Temp</label><input class="boxed" id="c2" value="75.50"><span>C</span><i class="dot"></i></div>
              <div class="fld"><label for="c3">Post Mash Gravity</label><input class="sunk" id="c3" readonly value="1.048"><span>SG</span><i class="dot"></i></div>
              <div class="fld"><label for="c4">Est Mash Eff</label><input class="sunk" id="c4" readonly value="73.0"><span>%</span></div>
              <div class="fld"><label for="c5">Est Pre-Boil Vol</label><input class="sunk" id="c5" readonly value="7.05"><span>gal</span><i class="dot"></i></div>
            </section>
            <section class="g4"><h2 class="sec">Water and Unadjusted Mash pH</h2>
              <div class="fld"><label for="d1">Water</label><input class="sunk wide" id="d1" readonly value="Toronto"></div>
              <div class="fld"><label for="d2">Water pH</label><input class="sunk" id="d2" readonly value="7.00"></div>
              <div class="fld"><label for="d3">Water Resid Alk</label><input class="sunk" id="d3" readonly value="-2.18"><span>ppm as CaCO3</span></div>
              <div class="fld"><label for="d4">Unadjusted Mash pH</label><input class="sunk" id="d4" readonly value="5.71"><i class="dot red"></i></div>
            </section>
          </div>

          <h2 class="sec acid-title">Mash pH Acid Additions</h2>
          <div class="acid">
            <div class="listbox"><table>
              <colgroup><col style="width:83px"><col style="width:300px"><col></colgroup>
              <tr><th>Amt<svg class="ic"><use href="#up"/></svg></th><th>Name</th><th></th></tr>
              <tr class="h-100"><td></td><td></td><td></td></tr>
            </table></div>
            <div class="acid-btns">
              <button class="tb"><svg class="ic"><use href="#acid"/></svg>Add Acid</button>
              <button class="tb"><svg class="ic"><use href="#claw"/></svg>Add Acid Malt</button>
            </div>
            <section class="final pt-1"><h2 class="sec">Final Mash pH Adjustments</h2>
              <div class="fld"><label for="e1">Adjusted Mash pH</label><input class="sunk" id="e1" readonly value="5.71"><i class="dot red"></i></div>
            </section>
          </div>
        </div>
        <div class="vscroll d-flex flex-column">
          <button class="mini-arrow" aria-label="Scroll up"><svg width="9" height="6"><path d="M1 5l3.500-3.500L8 5" fill="none" stroke="#444" stroke-width="1.500"/></svg></button>
          <div class="thumb"></div>
          <button class="mini-arrow mt-auto" aria-label="Scroll down"><svg width="9" height="6"><path d="M1 1l3.500 3.500L8 1" fill="none" stroke="#444" stroke-width="1.500"/></svg></button>
        </div>
      </div>
    </main>
  </div>

  <footer class="taskbar d-flex">
    <button class="tk solo sys" aria-label="Start"><svg class="winlogo" viewBox="0 0 16 16"><path d="M0 2.300l7-1v6.200H0zM8 1.200L16 0v7.500H8zM0 8.500h7v6.200l-7-1zM8 8.500h8V16l-8-1.200z" fill="#fff"/></svg></button>
    <div class="find d-flex align-items-center"><svg width="17" height="18" class="ms-2 me-2 flex-shrink-0"><circle cx="10.500" cy="6.500" r="5" fill="none" stroke="#333" stroke-width="1.300"/><path d="M7 10.500L1.500 16.500" stroke="#333" stroke-width="1.300"/></svg><input class="ms-1" type="text" placeholder="Type here to search" aria-label="Type here to search"></div>
    <div class="d-flex">
      <button class="tk solo sys" aria-label="Cortana"><svg viewBox="0 0 20 20"><circle cx="10" cy="10" r="6" fill="none" stroke="#fff" stroke-width="2"/></svg></button>
      <button class="tk solo sys" aria-label="Task View"><svg viewBox="0 0 20 20"><path d="M3.500 7h9v6h-9zM3.500 2.500V5h9V2.500M3.500 17.500V15h9v2.500M16.500 2v7M16.500 12v6" fill="none" stroke="#ddd"/><path d="M15.500 8h2v3h-2z" fill="#fff"/></svg></button>
    </div>
    <div class="d-flex apps">
      <button class="tk run"><svg viewBox="0 0 20 20"><path d="M2 1l9-1v19H2z" fill="#f6d47b"/><path d="M11 2l3 1v14h-3z" fill="#cfa13b"/></svg>Blotters</button>
      <button class="tk solo" aria-label="Remote keyboard"><svg viewBox="0 0 20 20"><path d="M3 1l15-1-2 14-12-1z" fill="url(#gSky)" stroke="#aab"/><path d="M0 4h14v6H0z" fill="#9fcaf0"/><path d="M1 6h12M1 8h12" stroke="#235f9a" stroke-dasharray="1 1"/><ellipse cx="11" cy="17" rx="5" ry="2.500" fill="#ccc"/></svg></button>
      <button class="tk solo" aria-label="PuTTY"><svg viewBox="0 0 20 20"><path d="M9 1h9v8H9zM1 9h9v8H1z" fill="#ccc"/><path d="M10.500 2.500h6v5h-6zM2.500 10.500h6v4h-6z" fill="#1322d0"/><path d="M0 17h11v3H0zM11 9h9v3h-9z" fill="#bbb"/><path d="M14 4l-6 6h4l-6 6" fill="none" stroke="#ffe600" stroke-width="1.500"/></svg></button>
      <button class="tk run"><svg viewBox="0 0 20 20"><circle cx="10" cy="10" r="10" fill="#34a853"/><path d="M10 10L1.300 5A10 10 0 0 1 18.700 5z" fill="#ea4335"/><path d="M10 5h8.700A10 10 0 0 1 10 20l4.300-7.500z" fill="#fbbc05"/><path d="M1.300 5L6 13l4-3V5z" fill="#ea4335"/><path d="M1.300 5A10 10 0 0 0 10 20l4-7-8-.5z" fill="#34a853"/><circle cx="10" cy="10" r="5" fill="#fff"/><circle cx="10" cy="10" r="3.900" fill="#4285f4"/></svg>Google C...</button>
      <button class="tk run now"><svg><use href="#glass" width="22" height="22"/></svg>BeerSmit...</button>
      <button class="tk run"><svg viewBox="0 0 20 20"><path d="M1 1l13-1 3 11-13 2z" fill="url(#gSky)" stroke="#d5dbea"/><path d="M5 15l8-2 2 3-8 2z" fill="#bbb"/><circle cx="14.500" cy="14.500" r="5" fill="#e7ece7" stroke="#999"/><path d="M11.500 12.500l2.500 2-2.500 2M17.500 12l-2.500 2 2.500 2" fill="none" stroke="#2d9b3b" stroke-width="1.300"/></svg>TOR-699...</button>
      <button class="tk run ms-1"><svg viewBox="0 0 20 20"><path d="M0 12C0 6 5 3 11 4c5 1 7 4 6 9-1 4-5 3-6 2-2-1-3 0-3 2 0 3-8 1-8-5z" fill="#bfdcf0" stroke="#6fa4c8"/><circle cx="4.500" cy="10" r="1.600" fill="#e8412f"/><circle cx="8" cy="7" r="1.600" fill="#f4b400"/><circle cx="13" cy="7.500" r="1.600" fill="#3aa655"/><circle cx="4" cy="14" r="1.600" fill="#3c6fd6"/><path d="M18 0l-6 18" stroke="#dd9650" stroke-width="2"/></svg>Infusion ...</button>
    </div>
    <div class="tray">
      <svg viewBox="0 0 18 18"><path d="M4 11.500l5-5 5 5" fill="none" stroke="#fff" stroke-width="1.400"/></svg>
      <svg viewBox="0 0 18 18"><circle cx="8" cy="9" r="7" fill="#e9f2ea"/><path d="M3 9a5 5 0 0 1 9-3" fill="none" stroke="#2f9e46" stroke-width="2"/><path d="M8 4v9" stroke="#2b5fc0" stroke-width="1.500"/><rect x="10" y="9" width="7" height="7" fill="#f3b81f"/><path d="M11.500 9V7q2-2 4 0v2" fill="none" stroke="#ddd" stroke-width="1.300"/></svg>
      <svg viewBox="0 0 18 18"><rect x="6.500" y="5.500" width="9" height="8" fill="none" stroke="#fff"/><path d="M8 7h6v5H8zM16 8h1.500v3H16z" fill="#fff"/><path d="M1 4h5v3q-2.500 2-5 0zM2 2v2M5 2v2M3.500 8v5h3" fill="none" stroke="#fff"/></svg>
      <svg viewBox="0 0 18 18"><path d="M2 15A13 13 0 0 1 15 2.500M5.500 15.500A9.500 9.500 0 0 1 15 6M9 15.500A6 6 0 0 1 15 9.500" fill="none" stroke="#999" stroke-width="1.200"/><circle cx="13.500" cy="14" r="1.700" fill="#fff"/></svg>
      <svg viewBox="0 0 18 18"><path d="M1.500 7h2.500l4-3.500v11L4 11H1.500z" fill="none" stroke="#fff"/><path d="M10.500 6.500q2 2.500 0 5M12.500 5q3 4 0 8M14.800 3.500q4 5.500 0 11" fill="none" stroke="#bbb"/></svg>
      <span>ENG</span>
      <div class="clock">19:26<br>2020-05-28</div>
      <svg viewBox="0 0 18 18"><path d="M1.500 2.500h15v11h-5l-2.500 3v-3h-7.500z" fill="none" stroke="#fff" stroke-width="1.200"/></svg>
    </div>
  </footer>
</div>
</body>
</html>
